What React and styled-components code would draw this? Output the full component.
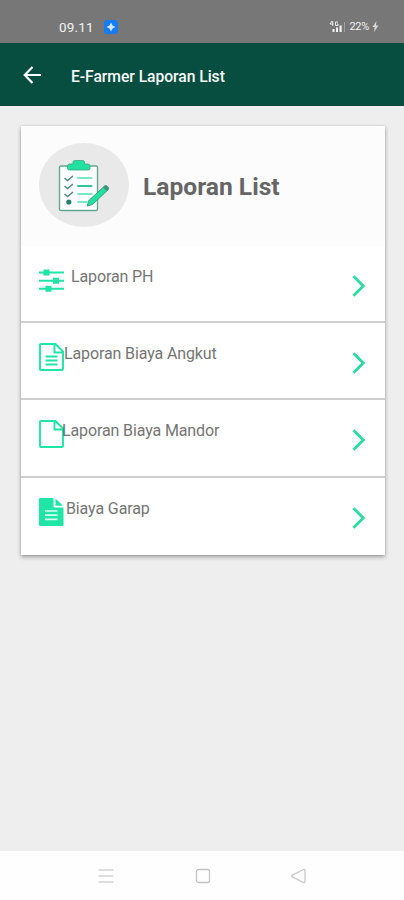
import React from 'react';
import styled, { createGlobalStyle } from 'styled-components';

const GlobalStyle = createGlobalStyle`
  * {
    box-sizing: border-box;
  }

  body {
    margin: 0;
    background: #eeeeee;
    font-family: Roboto, "Liberation Sans", sans-serif;
  }
`;

const Screen = styled.div`
  display: flex;
  flex-direction: column;
  width: 100%;
  height: 100vh;
  overflow: hidden;
  background: #eeeeee;
`;

const StatusBar = styled.div`
  display: flex;
  align-items: center;
  height: 43px;
  padding: 10px 25px 0 59px;
  background: #777777;
  color: #f2f2f2;
`;

const Clock = styled.span`
  width: 45px;
  font-size: 13.5px;
  letter-spacing: 0.2px;
`;

const StatusRight = styled.div`
  display: flex;
  align-items: center;
  gap: 3px;
  margin-left: auto;
`;

const Battery = styled.span`
  font-size: 11px;
  letter-spacing: -0.3px;
`;

const AppBar = styled.header`
  display: flex;
  align-items: center;
  height: 63px;
  padding: 2px 20px 0 23px;
  background: #074d40;
  border-bottom: 1px solid #06453a;
  color: #f7fbfa;
`;

const AppTitle = styled.h1`
  margin: 2px 0 0 29px;
  font-size: 15.7px;
  font-weight: 500;
  letter-spacing: -0.05px;
`;

const Content = styled.main`
  flex: 1;
  padding: 20px 19px 0 21px;
`;

const Card = styled.section`
  background: #ffffff;
  box-shadow: 0 2px 4px rgba(0, 0, 0, 0.34), 0 0 2px rgba(0, 0, 0, 0.12);
`;

const CardHeader = styled.div`
  display: flex;
  align-items: center;
  height: 120px;
  padding: 0 18px 2px;
  background: #fcfcfc;
`;

const Avatar = styled.div`
  display: flex;
  align-items: center;
  justify-content: center;
  width: 90px;
  height: 84px;
  border-radius: 50%;
  background: #e9e9e9;
`;

const CardTitle = styled.h2`
  margin: 3px 0 0 14px;
  color: #666666;
  font-size: 24.6px;
  font-weight: 700;
`;

const Row = styled.div`
  display: flex;
  align-items: flex-start;
  height: 77.2px;
  padding: 20px 19px 0 18px;
  border-bottom: ${({ $last }) => ($last ? 'none' : '2px solid #cfcfcf')};
`;

const RowIcon = styled.div`
  flex: none;
  width: 25px;
  height: 28px;
`;

const Label = styled.span`
  flex: 1;
  margin-top: 1px;
  margin-left: ${({ $offset }) => $offset}px;
  color: #757575;
  font-size: 16px;
  line-height: 20px;
  letter-spacing: -0.12px;
  white-space: nowrap;
`;

const ChevronBox = styled.div`
  flex: none;
  width: 14px;
  height: 22px;
  margin-top: 9px;
`;

const NavBar = styled.nav`
  display: flex;
  align-items: center;
  justify-content: space-between;
  height: 49px;
  padding: 1px 97px 0 97px;
  background: #fefefe;
`;

const Svg = styled.svg`
  display: block;
`;

const green = '#1fe5a5';

const BackArrow = () => (
  <Svg width="19" height="18" viewBox="0 0 19 18" fill="none" stroke="#ffffff" strokeWidth="2.2">
    <path d="M18 9H2M9.500 1L1.700 9l7.800 8" />
  </Svg>
);

const AppBadge = () => (
  <Svg width="14" height="14" viewBox="0 0 14 14">
    <rect width="14" height="14" rx="3.500" fill="#157cf5" />
    <path d="M7 2.500L8.600 5.400 11.500 7 8.600 8.600 7 11.500 5.400 8.600 2.500 7 5.400 5.400z" fill="#cfe6ff" />
  </Svg>
);

const Signal = () => (
  <Svg width="17" height="13" viewBox="0 0 17 13">
    <path d="M3 1L1 4h3.500M3.700 1v5M9 2H6.500v3.500H9V4H8" fill="none" stroke="#e8e8e8" strokeWidth="1" />
    <path d="M3.500 9h2v3h-2zM7 7.500h2V12H7zM10.500 5.500h2.200V12h-2.200z" fill="#f2f2f2" />
    <path d="M15.500 2v10" stroke="#a0a0a0" strokeWidth="1" />
  </Svg>
);

const Bolt = () => (
  <Svg width="7" height="11" viewBox="0 0 7 11">
    <path d="M4.500 0L0.500 6h2.200L2 11l4.500-6.500H4z" fill="#d6d6d6" />
  </Svg>
);

const Clipboard = () => (
  <Svg width="54" height="56" viewBox="0 0 54 56">
    <rect x="2.500" y="9" width="38" height="44.500" rx="1.500" fill="#ffffff" stroke="#62a893" strokeWidth="1.400" />
    <path
      d="M10.500 11.500V9q0-1.500 2-2h3.500V5q0-1.500 2-1.500h7.500q2 0 2 1.500v2H31q2 0 2 2v2.500q0 1.500-2 1.500H12.500q-2 0-2-1.500z"
      fill="#21e0a0"
      stroke="#3ba985"
      strokeWidth="0.800"
    />
    <path
      d="M7.500 21l3 2.500 5.500-4.500M7.500 29l3 2.500 5.500-4.500M7.500 37l3 2.500 5.500-4.500"
      fill="none"
      stroke="#4c8b7c"
      strokeWidth="1.500"
    />
    <circle cx="11.800" cy="45" r="2.600" fill="#297e68" />
    <path d="M20.300 21h15M20.300 37h15M20.300 45h10" stroke="#7ae8c2" strokeWidth="2" />
    <path d="M20.300 29h15" stroke="#37c698" strokeWidth="2" />
    <path d="M30.300 49l1.200-5.200L47.500 29q1.500-1.200 3.200.5t.5 3.200L35.500 47.500z" fill="#21e0a0" stroke="#3a997c" strokeWidth="0.900" />
    <path d="M47.500 29q1.500-1.200 3.200.5t.5 3.200l-1.500 1.200-3.700-3.500z" fill="#46907c" />
  </Svg>
);

const Sliders = () => (
  <Svg width="25" height="28" viewBox="0 0 25 28">
    <path d="M0 6.500h25M0 14.800h25M0 22.800h25" stroke={green} strokeWidth="1.900" />
    <path d="M4.500 3.500h6v6h-6zM14 11.800h6v6h-6zM6.500 19.800h6v6h-6z" fill={green} />
  </Svg>
);

const FileOutline = ({ lines }) => (
  <Svg width="25" height="28" viewBox="0 0 25 28" fill="none" stroke={green} strokeWidth="1.900">
    <path d="M2 1h14.500L24 8.500V26q0 1-1 1H2q-1 0-1-1V2q0-1 1-1z" />
    <path d="M15.500 1v8.500H24" />
    {lines && <path d="M6.500 13.500h12M6.500 17.500h12M6.500 21.500h12" />}
  </Svg>
);

const FileSolid = () => (
  <Svg width="25" height="28" viewBox="0 0 25 28">
    <path d="M1.300 0H14.500v8.500q0 1 1 1H24.500V27q0 1-1 1H1.300Q0 28 0 27V1Q0 0 1.300 0z" fill={green} />
    <path d="M16.500 0.500L24 7.700h-7.500z" fill={green} />
    <path d="M6 13h12.500M6 17.200h12.500M6 21.400h12.500" stroke="#d8fff1" strokeWidth="1.700" />
  </Svg>
);

const Chevron = () => (
  <Svg width="14" height="22" viewBox="0 0 14 22" fill="none" stroke="#2cdc9f" strokeWidth="2.800">
    <path d="M1.500 1.200L11.300 11 1.500 20.800" />
  </Svg>
);

const MenuIcon = () => (
  <Svg width="18" height="16" viewBox="0 0 18 16">
    <path d="M1.500 2h15M1.500 8h15M1.500 14h15" stroke="#d2d2d2" strokeWidth="1.500" />
  </Svg>
);

const HomeIcon = () => (
  <Svg width="16" height="16" viewBox="0 0 16 16">
    <rect x="1.500" y="1.500" width="13" height="13" rx="2" fill="none" stroke="#c4c4c4" strokeWidth="1.300" />
  </Svg>
);

const NavBack = () => (
  <Svg width="17" height="16" viewBox="0 0 17 16">
    <path
      d="M13.500 1.500L2 7.300q-.800.700 0 1.400l11.500 5.800q1.500.200 1.500-1V2.500q0-1.200-1.500-1z"
      fill="none"
      stroke="#c8c8c8"
      strokeWidth="1.300"
    />
  </Svg>
);

const reports = [
  { label: 'Laporan PH', icon: <Sliders />, offset: 7 },
  { label: 'Laporan Biaya Angkut', icon: <FileOutline lines />, offset: 0 },
  { label: 'Laporan Biaya Mandor', icon: <FileOutline />, offset: -2 },
  { label: 'Biaya Garap', icon: <FileSolid />, offset: 2 },
];

const App = () => {
  return (
    <Screen>
      <GlobalStyle />
      <StatusBar>
        <Clock>09.11</Clock>
        <AppBadge />
        <StatusRight>
          <Signal />
          <Battery>22%</Battery>
          <Bolt />
        </StatusRight>
      </StatusBar>
      <AppBar>
        <BackArrow />
        <AppTitle>E-Farmer Laporan List</AppTitle>
      </AppBar>
      <Content>
        <Card>
          <CardHeader>
            <Avatar>
              <Clipboard />
            </Avatar>
            <CardTitle>Laporan List</CardTitle>
          </CardHeader>
          {reports.map((report, i) => (
            <Row key={report.label} $last={i === reports.length - 1}>
              <RowIcon>{report.icon}</RowIcon>
              <Label $offset={report.offset}>{report.label}</Label>
              <ChevronBox>
                <Chevron />
              </ChevronBox>
            </Row>
          ))}
        </Card>
      </Content>
      <NavBar>
        <MenuIcon />
        <HomeIcon />
        <NavBack />
      </NavBar>
    </Screen>
  );
};

export default App;
